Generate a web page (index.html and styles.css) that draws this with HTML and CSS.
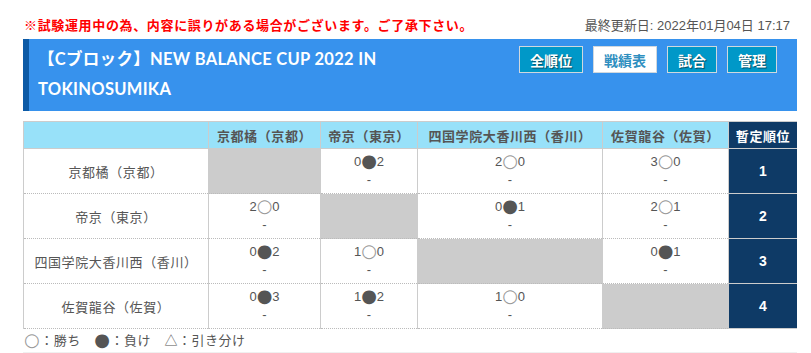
FILE: index.html
```
<!DOCTYPE html>
<html lang="ja">
<head>
<meta charset="utf-8">
<title>戦績表</title>
<link rel="stylesheet" href="styles.css">
</head>
<body>
<div class="page">
  <div class="topline">
    <span class="notice">※試験運用中の為、内容に誤りがある場合がございます。ご了承下さい。</span>
    <span class="updated">最終更新日: 2022年01月04日 17:17</span>
  </div>
  <div class="header">
    <h1 class="title">【Cブロック】NEW BALANCE CUP 2022 IN TOKINOSUMIKA</h1>
    <nav class="tabs">
      <a class="tab">全順位</a>
      <a class="tab tab-active">戦績表</a>
      <a class="tab">試合</a>
      <a class="tab">管理</a>
    </nav>
  </div>
  <table class="grid">
    <colgroup>
      <col class="c-team"><col class="c-a"><col class="c-b"><col class="c-c"><col class="c-d"><col class="c-rank">
    </colgroup>
    <thead>
      <tr>
        <th></th>
        <th>京都橘（京都）</th>
        <th>帝京（東京）</th>
        <th>四国学院大香川西（香川）</th>
        <th>佐賀龍谷（佐賀）</th>
        <th class="rank-head">暫定順位</th>
      </tr>
    </thead>
    <tbody>
      <tr>
        <td class="team">京都橘（京都）</td>
        <td class="empty"></td>
        <td class="score"><div>0<span class="lose">●</span>2</div><div>-</div></td>
        <td class="score"><div>2<span class="win">○</span>0</div><div>-</div></td>
        <td class="score"><div>3<span class="win">○</span>0</div><div>-</div></td>
        <td class="rank">1</td>
      </tr>
      <tr>
        <td class="team">帝京（東京）</td>
        <td class="score"><div>2<span class="win">○</span>0</div><div>-</div></td>
        <td class="empty"></td>
        <td class="score"><div>0<span class="lose">●</span>1</div><div>-</div></td>
        <td class="score"><div>2<span class="win">○</span>1</div><div>-</div></td>
        <td class="rank">2</td>
      </tr>
      <tr>
        <td class="team">四国学院大香川西（香川）</td>
        <td class="score"><div>0<span class="lose">●</span>2</div><div>-</div></td>
        <td class="score"><div>1<span class="win">○</span>0</div><div>-</div></td>
        <td class="empty"></td>
        <td class="score"><div>0<span class="lose">●</span>1</div><div>-</div></td>
        <td class="rank">3</td>
      </tr>
      <tr>
        <td class="team">佐賀龍谷（佐賀）</td>
        <td class="score"><div>0<span class="lose">●</span>3</div><div>-</div></td>
        <td class="score"><div>1<span class="lose">●</span>2</div><div>-</div></td>
        <td class="score"><div>1<span class="win">○</span>0</div><div>-</div></td>
        <td class="empty"></td>
        <td class="rank">4</td>
      </tr>
    </tbody>
  </table>
  <p class="legend"><span class="win">○</span>：勝ち　<span class="lose">●</span>：負け　△：引き分け</p>
  <div class="footer-bar"></div>
</div>
</body>
</html>
```
FILE: styles.css
```
html, body {
  margin: 0;
  padding: 0;
  background: #fff;
}
body {
  font-family: "Liberation Sans", "Noto Sans CJK JP", sans-serif;
  color: #555;
  font-size: 13px;
}
.page {
  margin-left: 23px;
  width: 774px;
  overflow: hidden;
}
.topline {
  display: flex;
  justify-content: space-between;
  align-items: center;
  height: 20px;
  padding: 14px 7px 0 1px;
  margin-bottom: 5px;
}
.notice {
  color: #f00;
  font-weight: bold;
  font-family: "Noto Sans CJK JP", sans-serif;
  font-size: 13px;
  letter-spacing: 0.65px;
}
.updated {
  color: #555;
  font-size: 13px;
  font-family: "Liberation Sans", "Noto Sans CJK JP", sans-serif;
}
.header {
  display: flex;
  align-items: flex-start;
  background: #3792ed;
  border-left: 6px solid #0c5aa6;
  height: 72px;
  box-sizing: border-box;
  padding: 5px 20px 0 9px;
}
.title {
  flex: 1;
  margin: 0;
  max-width: 420px;
  color: #fff;
  font-family: "Lato", "Noto Sans CJK JP", sans-serif;
  font-weight: bold;
  font-size: 16.5px;
  line-height: 30px;
  letter-spacing: 0.3px;
}
.tabs {
  margin-left: auto;
  margin-top: 2px;
  display: flex;
  gap: 10px;
}
.tab {
  display: flex;
  align-items: center;
  justify-content: center;
  height: 27px;
  box-sizing: border-box;
  padding: 0 10px;
  background: #0098c8;
  border: 1px solid #d0d8de;
  color: #fff;
  font-family: "Noto Sans CJK JP", sans-serif;
  font-weight: bold;
  font-size: 14px;
  text-shadow: 1px 1px 1px rgba(0, 0, 0, 0.5);
}
.tab-active {
  background: #fff;
  color: #2f8fc0;
  text-shadow: none;
}
.grid {
  margin-top: 10px;
  width: 774px;
  border-collapse: collapse;
  table-layout: fixed;
}
.c-team { width: 185px; }
.c-a { width: 112px; }
.c-b { width: 97px; }
.c-c { width: 185px; }
.c-d { width: 126px; }
.c-rank { width: 69px; }
.grid th {
  height: 26px;
  padding: 0;
  background: #98e1f9;
  border: 1px solid #cccccc;
  color: #555;
  font-family: "Noto Sans CJK JP", sans-serif;
  font-weight: bold;
  font-size: 13px;
  letter-spacing: 0.6px;
  text-align: center;
}
.grid th.rank-head {
  background: #0e3a66;
  color: #fff;
}
.grid td {
  height: 44px;
  padding: 0;
  border-left: 1px solid #cccccc;
  border-right: 1px solid #cccccc;
  border-bottom: 1px dotted #bbbbbb;
  text-align: center;
  vertical-align: middle;
}
.grid td.team {
  font-family: "Noto Sans CJK JP", sans-serif;
  font-size: 13px;
  letter-spacing: 0.6px;
  color: #555;
}
.grid td.empty {
  background: #cccccc;
}
.grid td.score {
  font-size: 13px;
  line-height: 18px;
  color: #555;
}
.grid td.rank {
  background: #0e3a66;
  color: #fff;
  font-weight: bold;
  font-size: 14px;
  border-bottom: 1px solid #cccccc;
}
.win, .lose {
  display: inline-block;
  font-family: "DejaVu Sans", sans-serif;
  font-size: 18px;
  line-height: 13px;
  vertical-align: -1px;
}
.win { color: #999; }
.lose { color: #555; }
.legend {
  margin: 2px 0 0 1px;
  font-family: "Noto Sans CJK JP", sans-serif;
  font-size: 13px;
  line-height: 18px;
  letter-spacing: 0.5px;
  color: #555;
}
.footer-bar {
  margin-top: 3px;
  height: 10px;
  background: #f0f0f0;
}
```
